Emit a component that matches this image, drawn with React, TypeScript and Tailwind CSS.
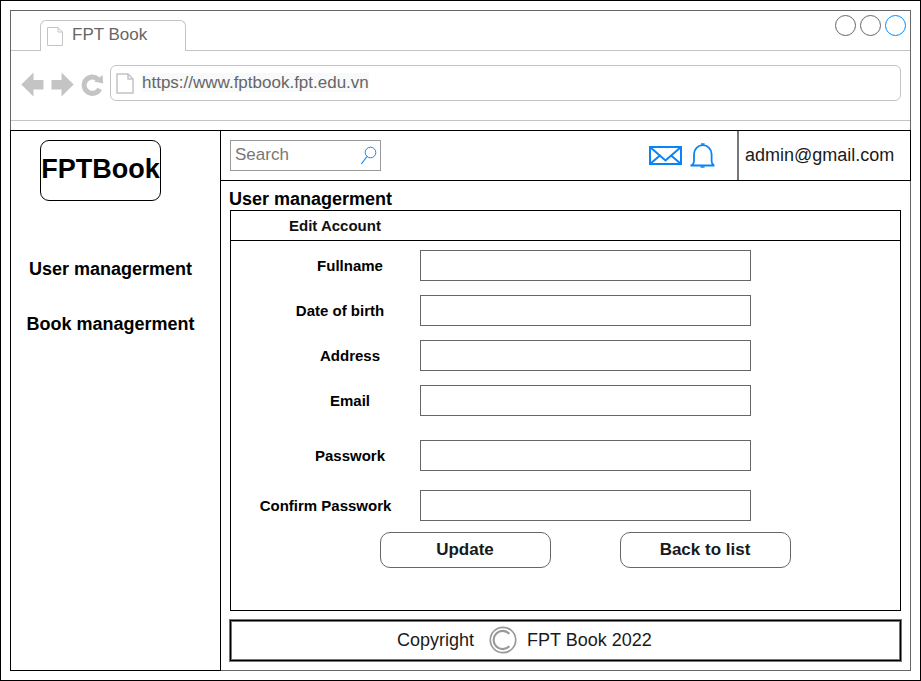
import React from "react";

const fields = [
  { label: "Fullname", row: "mt-[9px]", pad: "pl-[49px]" },
  { label: "Date of birth", row: "mt-[14px]", pad: "pl-[29px]" },
  { label: "Address", row: "mt-[14px]", pad: "pl-[49px]" },
  { label: "Email", row: "mt-[14px]", pad: "pl-[49px]" },
  { label: "Passwork", row: "mt-[24px]", pad: "pl-[49px]" },
  { label: "Confirm Passwork", row: "mt-[19px]", pad: "pl-0" },
];

function WindowControls() {
  return (
    <svg className="mt-[3px] mr-[4px]" width="72" height="24" viewBox="0 0 72 24" fill="none">
      <circle cx="11.5" cy="11.5" r="10" stroke="#666" />
      <circle cx="36.5" cy="11.5" r="10" stroke="#666" />
      <circle cx="61.5" cy="11.5" r="10" stroke="#008cff" />
    </svg>
  );
}

function TabStrip() {
  return (
    <div className="flex h-10 shrink-0">
      <div className="w-[30px] border-b border-[#c4c4c4]" />
      <div className="mt-[9px] -ml-px flex w-[146px] rounded-t-[6px] border border-b-0 border-[#c4c4c4]">
        <svg className="mt-[5px] ml-[6px] shrink-0" width="17" height="20" viewBox="0 0 17 20" fill="none" stroke="#c4c4c4">
          <path d="M.5 1.5h10.5l4.500 4.500V19.500H.5z M11 1.500v4.500h4.500" />
        </svg>
        <span className="ml-2 text-[17px] leading-[27px] whitespace-nowrap text-[#666]">FPT Book</span>
      </div>
      <div className="-ml-px flex grow justify-end border-b border-[#c4c4c4]">
        <WindowControls />
      </div>
    </div>
  );
}

function Toolbar() {
  return (
    <div className="flex h-[70px] shrink-0 border-b border-[#c4c4c4] pt-[14px]">
      <svg className="ml-[10px] shrink-0" width="84" height="38" viewBox="21 65 84 38" fill="none">
        <path d="M21.300 84.500 33.500 72.500v7.500h10v9.500h-10v7z" fill="#c4c4c4" />
        <path d="M73.700 84.500 61.500 72.500v7.500h-10v9.500h10v7z" fill="#c4c4c4" />
        <path d="M98 79.200A8.200 8.200 0 1 0 99.700 88.800" stroke="#c4c4c4" strokeWidth="5" />
        <path d="M102.600 75l.6 8.600-9.200-2z" fill="#c4c4c4" />
      </svg>
      <div className="ml-[5px] flex h-9 w-[791px] rounded-[6px] border border-[#c4c4c4]">
        <svg className="mt-[7px] ml-[5px] shrink-0" width="18" height="21" viewBox="0 0 18 21" fill="none" stroke="#c4c4c4" strokeWidth="1.500">
          <path d="M1 1h11l5 5v14H1z M12 1v5h5" />
        </svg>
        <span className="mt-[7px] ml-2 h-[19px] bg-[#f8f9fa] text-[17px] leading-5 whitespace-nowrap text-[#666]">
          https://www.fptbook.fpt.edu.vn
        </span>
      </div>
    </div>
  );
}

function Sidebar() {
  return (
    <aside className="flex w-[211px] shrink-0 flex-col items-center border border-black">
      <div className="mt-[9px] ml-[29px] flex h-[61px] w-[121px] justify-center self-start rounded-[9px] border border-black text-[27px] leading-[57px] font-bold whitespace-nowrap">
        FPTBook
      </div>
      <nav className="mt-[58px] flex flex-col items-center gap-[35px] pr-[10px] text-[18px] leading-5 font-bold">
        <span>User managerment</span>
        <span>Book managerment</span>
      </nav>
    </aside>
  );
}

function Header() {
  return (
    <header className="-ml-px flex h-[51px] w-[691px] shrink-0 border border-black">
      <div className="mt-[9px] ml-[9px] flex h-[31px] w-[151px] justify-between border border-[#999] pl-[4px]">
        <span className="text-[17px] leading-7 text-[#777]">Search</span>
        <svg className="mt-[5px] mr-[3px]" width="17" height="19" viewBox="0 0 17 19" fill="none" stroke="#008cff">
          <circle cx="10.500" cy="6.500" r="5.300" />
          <path d="M7 10.500 1.300 18" strokeWidth="1.200" />
        </svg>
      </div>
      <svg className="mt-[11px] ml-[267px]" width="68" height="28" viewBox="648 142 68 28" fill="none" stroke="#0a84f5" strokeWidth="2">
        <path d="M650 147h31v17h-31z M650 147l15.500 13.500L681 147 M650 164l10.500-9 M681 164l-10.500-9" />
        <path d="M690.500 165.500h24 M692 165c1.500-1 2-2 2-4V154a8.800 8.800 0 0 1 17.600 0V161c0 2 .5 3 2 4" strokeWidth="1.800" />
        <path d="M701 144h3.600 M700.500 167h4" strokeWidth="1.500" />
      </svg>
      <div className="ml-[21px] flex grow border-l-2 border-[#777] pl-[6px] text-[18px] leading-[48px] text-[#1a1a1a]">
        admin@gmail.com
      </div>
    </header>
  );
}

function AccountForm() {
  return (
    <section className="ml-[9px] flex h-[401px] w-[671px] shrink-0 flex-col border border-black">
      <h2 className="h-[30px] border-b border-black pl-[58px] text-[15px] leading-[30px] font-bold text-[#111]">Edit Account</h2>
      {fields.map((f) => (
        <label key={f.label} className={`flex shrink-0 ${f.row}`}>
          <span className={`w-[189px] text-center text-[15px] leading-[31px] font-bold whitespace-nowrap ${f.pad}`}>{f.label}</span>
          <input className="h-[31px] w-[331px] border border-[#666] bg-white px-2 outline-none" />
        </label>
      ))}
      <div className="mt-[11px] ml-[149px] flex gap-[69px] text-[17px] font-bold text-[#1a1a1a]">
        <button className="h-9 w-[171px] rounded-[10px] border border-[#666] pr-px">Update</button>
        <button className="h-9 w-[171px] rounded-[10px] border border-[#666] pr-px">Back to list</button>
      </div>
    </section>
  );
}

function Footer() {
  return (
    <footer className="mt-2 ml-2 flex h-[43px] w-[673px] shrink-0 border border-[#777]">
      <div className="flex grow border border-black">
        <div className="flex grow border border-[#777] text-[18px] leading-[37px] whitespace-pre text-[#1a1a1a]">
          <span className="ml-[165px]">Copyright</span>
          <svg className="mt-[4px] ml-[15px]" width="28" height="28" viewBox="0 0 28 28" fill="none" stroke="#999">
            <circle cx="14" cy="14" r="12.700" strokeWidth="1.700" />
            <path d="M20.300 7.700a9.100 9.100 0 1 0 0 12.600" strokeWidth="2.100" />
          </svg>
          <span className="ml-[10px]">FPT Book 2022</span>
        </div>
      </div>
    </footer>
  );
}

export default function App() {
  return (
    <div className="h-[681px] w-[921px] border border-black bg-white p-[9px] font-['Liberation_Sans',Arial,sans-serif] text-black">
      <div className="flex h-[661px] w-[901px] flex-col border border-[#666]">
        <TabStrip />
        <Toolbar />
        <div className="-mx-px mt-[9px] -mb-px flex grow">
          <Sidebar />
          <main className="flex grow flex-col">
            <Header />
            <h1 className="ml-2 h-[29px] shrink-0 pt-2 text-[18px] leading-5 font-bold">User managerment</h1>
            <AccountForm />
            <Footer />
          </main>
        </div>
      </div>
    </div>
  );
}
